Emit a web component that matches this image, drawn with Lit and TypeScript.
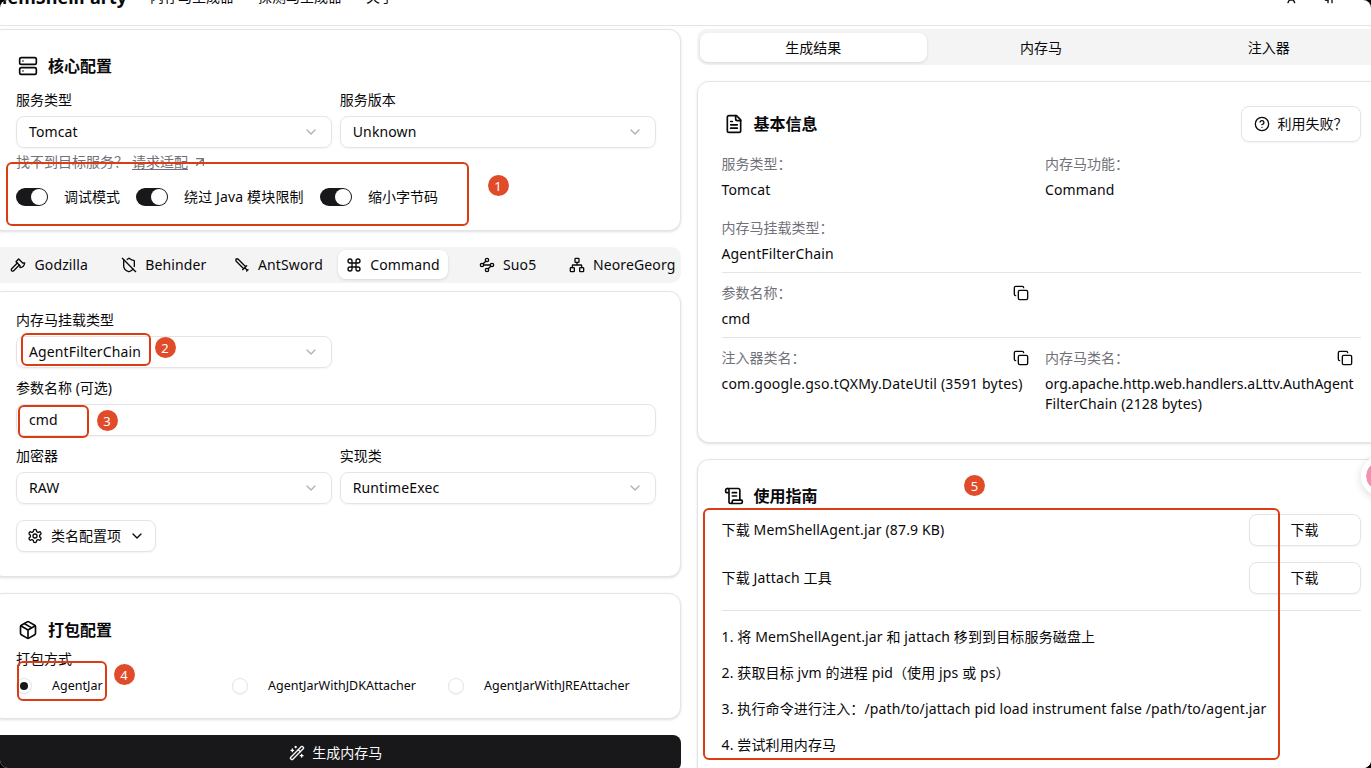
import { LitElement, html, css, svg } from "lit";
import { customElement, property } from "lit/decorators.js";

const icons: Record<string, unknown> = {
  server: svg`<rect x="2" y="2" width="20" height="8" rx="2"/><rect x="2" y="14" width="20" height="8" rx="2"/><path d="M6 6h.01M6 18h.01"/>`,
  chevron: svg`<path d="m6 9 6 6 6-6"/>`,
  arrow: svg`<path d="M7 7h10v10M7 17 17 7"/>`,
  axe: svg`<path d="m14 12-8.5 8.5a2.12 2.12 0 1 1-3-3L11 9"/><path d="M15 13 9 7l4-4 6 6h3a8 8 0 0 1-7 7z"/>`,
  shieldOff: svg`<path d="m2 2 20 20"/><path d="M5 5a1 1 0 0 0-1 1v7c0 5 3.5 7.5 7.67 8.94a1 1 0 0 0 .67.01c2.35-.82 4.48-1.97 5.9-3.71"/><path d="M9.309 3.652A12.252 12.252 0 0 0 11.24 2.28a1.17 1.17 0 0 1 1.52 0C14.51 3.81 17 5 19 5a1 1 0 0 1 1 1v7a9.784 9.784 0 0 1-.08 1.264"/>`,
  sword: svg`<path d="M14.5 17.5 3 6V3h3l11.5 11.5M13 19l6-6M16 16l4 4M19 21l2-2"/>`,
  command: svg`<path d="M15 6v12a3 3 0 1 0 3-3H6a3 3 0 1 0 3 3V6a3 3 0 1 0-3 3h12a3 3 0 1 0-3-3"/>`,
  waypoints: svg`<circle cx="12" cy="4.5" r="2.5"/><path d="m10.2 6.3-3.9 3.9"/><circle cx="4.5" cy="12" r="2.5"/><path d="M7 12h10"/><circle cx="19.5" cy="12" r="2.5"/><path d="m13.8 17.7 3.9-3.9"/><circle cx="12" cy="19.5" r="2.5"/>`,
  network: svg`<rect x="16" y="16" width="6" height="6" rx="1"/><rect x="2" y="16" width="6" height="6" rx="1"/><rect x="9" y="2" width="6" height="6" rx="1"/><path d="M5 16v-3a1 1 0 0 1 1-1h12a1 1 0 0 1 1 1v3M12 12V8"/>`,
  wand: svg`<path d="m21.64 3.64-1.28-1.28a1.21 1.21 0 0 0-1.72 0L2.36 18.64a1.21 1.21 0 0 0 0 1.72l1.28 1.28a1.2 1.2 0 0 0 1.72 0L21.64 5.36a1.2 1.2 0 0 0 0-1.72"/><path d="m14 7 3 3M5 6v4M19 14v4M10 2v2M7 8H3M21 16h-4M11 3H9"/>`,
  box: svg`<path d="M11 21.73a2 2 0 0 0 2 0l7-4A2 2 0 0 0 21 16V8a2 2 0 0 0-1-1.73l-7-4a2 2 0 0 0-2 0l-7 4A2 2 0 0 0 3 8v8a2 2 0 0 0 1 1.73z"/><path d="M12 22V12M3.29 7 12 12l8.71-5M7.5 4.27l9 5.15"/>`,
  settings: svg`<path d="M12.22 2h-.44a2 2 0 0 0-2 2v.18a2 2 0 0 1-1 1.73l-.43.25a2 2 0 0 1-2 0l-.15-.08a2 2 0 0 0-2.73.73l-.22.38a2 2 0 0 0 .73 2.73l.15.1a2 2 0 0 1 1 1.72v.51a2 2 0 0 1-1 1.74l-.15.09a2 2 0 0 0-.73 2.73l.22.38a2 2 0 0 0 2.73.73l.15-.08a2 2 0 0 1 2 0l.43.25a2 2 0 0 1 1 1.73V20a2 2 0 0 0 2 2h.44a2 2 0 0 0 2-2v-.18a2 2 0 0 1 1-1.73l.43-.25a2 2 0 0 1 2 0l.15.08a2 2 0 0 0 2.73-.73l.22-.39a2 2 0 0 0-.73-2.73l-.15-.08a2 2 0 0 1-1-1.74v-.5a2 2 0 0 1 1-1.74l.15-.09a2 2 0 0 0 .73-2.73l-.22-.38a2 2 0 0 0-2.73-.73l-.15.08a2 2 0 0 1-2 0l-.43-.25a2 2 0 0 1-1-1.73V4a2 2 0 0 0-2-2z"/><circle cx="12" cy="12" r="3"/>`,
  file: svg`<path d="M15 2H6a2 2 0 0 0-2 2v16a2 2 0 0 0 2 2h12a2 2 0 0 0 2-2V7Z"/><path d="M14 2v4a2 2 0 0 0 2 2h4M10 9H8M16 13H8M16 17H8"/>`,
  scroll: svg`<path d="M15 12h-5M15 8h-5M19 17V5a2 2 0 0 0-2-2H4"/><path d="M8 21h12a2 2 0 0 0 2-2v-1a1 1 0 0 0-1-1H11a1 1 0 0 0-1 1v1a2 2 0 1 1-4 0V5a2 2 0 1 0-4 0v2a1 1 0 0 0 1 1h3"/>`,
  copy: svg`<rect x="8" y="8" width="14" height="14" rx="2"/><path d="M4 16c-1.1 0-2-.9-2-2V4c0-1.1.9-2 2-2h10c1.1 0 2 .9 2 2"/>`,
  help: svg`<circle cx="12" cy="12" r="10"/><path d="M9.09 9a3 3 0 0 1 5.83 1c0 2-3 3-3 3M12 17h.01"/>`,
  languages: svg`<path d="m5 8 6 6M4 14l6-6 2-3M2 5h12M7 2h1M22 22l-5-10-5 10M14 18h6"/>`,
  github: svg`<path d="M15 22v-4a4.8 4.8 0 0 0-1-3.5c3 0 6-2 6-5.5.08-1.25-.27-2.48-1-3.5.28-1.15.28-2.35 0-3.5 0 0-1 0-3 1.5-2.64-.5-5.36-.5-8 0C6 2 5 2 5 2c-.3 1.15-.3 2.35 0 3.5A5.403 5.403 0 0 0 4 9c0 3.5 3 5.5 6 5.5-.39.49-.68 1.05-.85 1.65-.17.6-.22 1.23-.15 1.85v4"/><path d="M9 18c-4.51 2-5-2-7-2"/>`,
};

@customElement("ui-icon")
export class UiIcon extends LitElement {
  @property() name = "";
  static styles = css`
    :host { display: block; width: 16px; height: 16px; flex: none; }
    svg { display: block; width: 100%; height: 100%; overflow: visible; fill: none; stroke: currentColor; stroke-width: 2; stroke-linecap: round; stroke-linejoin: round; }
  `;
  render() {
    return html`<svg viewBox="0 0 24 24">${icons[this.name]}</svg>`;
  }
}

@customElement("ui-select")
export class UiSelect extends LitElement {
  @property() value = "";
  static styles = css`
    :host { display: flex; box-sizing: border-box; height: 32px; align-items: center; justify-content: space-between; padding: 0 12px; border: 1px solid #e4e4e7; border-radius: 8px; box-shadow: 0 1px 2px rgba(0, 0, 0, 0.05); line-height: 20px; letter-spacing: 0.12px; }
    ui-icon { color: #b0b0b4; }
  `;
  render() {
    return html`<span>${this.value}</span><ui-icon name="chevron"></ui-icon>`;
  }
}

@customElement("app-root")
export class AppRoot extends LitElement {
  static styles = css`
    * { box-sizing: border-box; }
    :host { display: block; position: relative; width: 1371px; height: 768px; overflow: hidden; background: #000; color: #09090b; font: 14px/20px "Noto Sans", "Noto Sans CJK SC", sans-serif; }
    .page { height: 768px; overflow: hidden; background: #fff; border-radius: 8px; display: flex; flex-direction: column; }
    header { height: 26px; flex: none; border-bottom: 1px solid #e4e4e7; display: flex; align-items: flex-start; justify-content: space-between; white-space: nowrap; }
    nav { display: flex; gap: 24px; margin: -13px 0 0 -8px; }
    .brand { font-size: 18px; font-weight: 700; width: 133px; padding-left: 0; display: flex; justify-content: flex-end; margin-right: 1px; transform: translateX(2px); }
    .tools { display: flex; gap: 26px; margin: -12px 33px 0 0; }
    main { display: grid; grid-template-columns: 689.5px 689px; column-gap: 16px; margin: 3px 0 0 -9px; align-items: start; }
    .card { border: 1px solid #e4e4e7; border-radius: 12px; box-shadow: 0 1px 3px rgba(0, 0, 0, 0.1), 0 1px 2px -1px rgba(0, 0, 0, 0.1); padding: 0 24px; background: #fff; overflow: hidden; }
    .title { display: flex; align-items: center; gap: 10px; padding-left: 2px; height: 24px; font-size: 16px; line-height: 24px; font-weight: 700; }
    .title ui-icon { width: 20px; height: 20px; }
    .two { display: grid; grid-template-columns: 1fr 1fr; column-gap: 8px; }
    .label { line-height: 20px; height: 26px; }
    .core { height: 202px; padding-top: 24px; }
    .core .two { margin-top: 12px; }
    .hint { display: flex; align-items: center; color: #71717a; height: 20px; margin-top: 4px; }
    .hint .q { width: 116px; white-space: nowrap; }
    .hint u { text-underline-offset: 2px; margin-right: 4px; }
    .switches { display: flex; align-items: center; gap: 16px; height: 20px; margin-top: 15px; white-space: nowrap; }
    .switch { width: 32px; height: 18px; border-radius: 9px; background: #18181b; padding: 1px; display: flex; justify-content: flex-end; }
    .switch::after { content: ""; width: 16px; height: 16px; border-radius: 50%; background: #fff; }
    .w120 { width: 120px; letter-spacing: 0.15px; }
    .tabs { display: grid; height: 36px; border-radius: 10px; background: #f4f4f5; padding: 3px; }
    .tab { display: flex; align-items: center; justify-content: center; gap: 8px; height: 29px; border-radius: 8px; white-space: nowrap; }
    .tab.on { background: #fff; box-shadow: 0 1px 3px rgba(0, 0, 0, 0.12); }
    .kinds { grid-template-columns: repeat(6, 1fr); gap: 4px; margin: 16px 0 8px; letter-spacing: 0.14px; }
    .results { grid-template-columns: repeat(3, 1fr); padding-top: 4px; }
    .shell { height: 286px; padding-top: 18px; }
    .half { width: 316px; }
    .gap { margin-top: 10px; }
    .input { height: 32px; border: 1px solid #e4e4e7; border-radius: 8px; box-shadow: 0 1px 2px rgba(0, 0, 0, 0.05); padding: 5px 12px; letter-spacing: 0.12px; }
    .btn { display: flex; align-items: center; justify-content: center; gap: 8px; border: 1px solid #e4e4e7; border-radius: 8px; background: #fff; box-shadow: 0 1px 2px rgba(0, 0, 0, 0.05); height: 32px; white-space: nowrap; }
    .classes { width: 140px; margin-top: 16px; }
    .pack { height: 126px; margin-top: 16px; padding-top: 24px; }
    .pack .label { margin-top: 7px; height: 20px; }
    .radios { display: grid; grid-template-columns: repeat(3, 216px); margin-top: 7px; font-size: 12.5px; }
    .radio { display: flex; align-items: center; gap: 20px; height: 20px; }
    .dot { width: 16px; height: 16px; border: 1px solid #e4e4e7; border-radius: 50%; box-shadow: 0 1px 2px rgba(0, 0, 0, 0.05); display: grid; place-items: center; flex: none; }
    .dot.on::after { content: ""; width: 8px; height: 8px; border-radius: 50%; background: #18181b; }
    .go { display: flex; align-items: center; justify-content: center; gap: 7px; height: 36px; margin-top: 16px; border-radius: 8px; background: #18181b; color: #fafafa; }
    .info { height: 362px; margin-top: 16px; padding-top: 24px; }
    .bar { display: flex; align-items: center; justify-content: space-between; height: 36px; }
    .help { width: 120px; height: 36px; }
    .facts { display: grid; grid-template-columns: 1fr 1fr; column-gap: 8px; letter-spacing: 0.14px; }
    .facts.base { padding: 2px 0 0; }
    .fact { height: 64px; padding-top: 10px; }
    .fact .k { display: flex; justify-content: space-between; align-items: center; height: 20px; color: #71717a; margin-bottom: 6px; padding-right: 8px; letter-spacing: 0; }
    .fact .k ui-icon { color: #09090b; }
    .wide { letter-spacing: 0.21px; }
    .tight { letter-spacing: 0.02px; }
    .line { border-top: 1px solid #e4e4e7; }
    .guide { height: 340px; margin-top: 16px; padding-top: 24px; }
    .dl { display: flex; justify-content: space-between; align-items: center; height: 32px; margin-bottom: 16px; letter-spacing: 0.16px; }
    .dl.first { margin-top: 6px; }
    .dl .btn { width: 112px; letter-spacing: 0; }
    .steps { margin-top: 16px; display: grid; row-gap: 16px; white-space: nowrap; letter-spacing: 0.13px; }
    .mark { position: absolute; border: 2px solid #dc3c14; border-radius: 6px; }
    .m1 { left: 6px; top: 162px; width: 463px; height: 64px; }
    .m2 { left: 21px; top: 333px; width: 130px; height: 33px; }
    .m3 { left: 18px; top: 405px; width: 71px; height: 33px; }
    .m4 { left: 17px; top: 661px; width: 90px; height: 40px; }
    .m5 { left: 703px; top: 508px; width: 577px; height: 252px; }
    .num { position: absolute; width: 21px; height: 21px; border-radius: 50%; background: #e04c2a; color: #fff; text-align: center; line-height: 22px; font-size: 13px; }
    .n1 { left: 487.5px; top: 174.5px; }
    .n2 { left: 154.5px; top: 336.5px; }
    .n3 { left: 96.5px; top: 410px; }
    .n4 { left: 113.5px; top: 663.5px; }
    .n5 { left: 964px; top: 475px; }
    .bubble { position: absolute; left: 1361px; top: 456px; width: 40px; height: 40px; border: 5px solid #fff; border-radius: 50%; background: #f490b0; background-clip: padding-box; box-shadow: 0 2px 8px rgba(0, 0, 0, 0.15); }
    .bubble::before { content: ""; position: absolute; inset: -5px; border: 5.5px solid #fff; border-radius: 50%; }
  `;

  private kinds = [
    ["axe", "Godzilla"], ["shieldOff", "Behinder"], ["sword", "AntSword"],
    ["command", "Command"], ["waypoints", "Suo5"], ["network", "NeoreGeorg"],
  ];

  private fact(k: string, v: unknown, copy = false) {
    return html`<div class="fact"><div class="k"><span>${k}</span>${copy ? html`<ui-icon name="copy"></ui-icon>` : ""}</div><div>${v}</div></div>`;
  }

  render() {
    return html`
      <div class="page">
        <header>
          <nav><span class="brand">MemShellParty</span><span>内存马生成器</span><span>探测马生成器</span><span>关于</span></nav>
          <div class="tools"><ui-icon name="languages"></ui-icon><ui-icon name="github"></ui-icon></div>
        </header>
        <main>
          <section>
            <div class="card core">
              <div class="title"><ui-icon name="server"></ui-icon>核心配置</div>
              <div class="two">
                <div><div class="label">服务类型</div><ui-select value="Tomcat"></ui-select></div>
                <div><div class="label">服务版本</div><ui-select value="Unknown"></ui-select></div>
              </div>
              <div class="hint"><span class="q">找不到目标服务？</span><u>请求适配</u><ui-icon name="arrow"></ui-icon></div>
              <div class="switches">
                <i class="switch"></i><span>调试模式</span>
                <i class="switch"></i><span class="w120">绕过 Java 模块限制</span>
                <i class="switch"></i><span>缩小字节码</span>
              </div>
            </div>
            <div class="tabs kinds">
              ${this.kinds.map(([i, t]) => html`<div class="tab ${t === "Command" ? "on" : ""}"><ui-icon name=${i}></ui-icon><span>${t}</span></div>`)}
            </div>
            <div class="card shell">
              <div class="label">内存马挂载类型</div>
              <ui-select class="half" value="AgentFilterChain"></ui-select>
              <div class="label gap">参数名称 (可选)</div>
              <div class="input">cmd</div>
              <div class="two gap">
                <div><div class="label">加密器</div><ui-select value="RAW"></ui-select></div>
                <div><div class="label">实现类</div><ui-select value="RuntimeExec"></ui-select></div>
              </div>
              <div class="btn classes"><ui-icon name="settings"></ui-icon>类名配置项<ui-icon name="chevron"></ui-icon></div>
            </div>
            <div class="card pack">
              <div class="title"><ui-icon name="box"></ui-icon>打包配置</div>
              <div class="label">打包方式</div>
              <div class="radios">
                <div class="radio"><i class="dot on"></i>AgentJar</div>
                <div class="radio"><i class="dot"></i>AgentJarWithJDKAttacher</div>
                <div class="radio"><i class="dot"></i>AgentJarWithJREAttacher</div>
              </div>
            </div>
            <div class="go"><ui-icon name="wand"></ui-icon>生成内存马</div>
          </section>
          <section>
            <div class="tabs results">
              <div class="tab on">生成结果</div><div class="tab">内存马</div><div class="tab">注入器</div>
            </div>
            <div class="card info">
              <div class="bar">
                <div class="title"><ui-icon name="file"></ui-icon>基本信息</div>
                <div class="btn help"><ui-icon name="help"></ui-icon>利用失败？</div>
              </div>
              <div class="facts base">
                ${this.fact("服务类型：", "Tomcat")}${this.fact("内存马功能：", "Command")}
                ${this.fact("内存马挂载类型：", "AgentFilterChain")}
              </div>
              <div class="facts line">${this.fact("参数名称：", "cmd", true)}</div>
              <div class="facts line">
                ${this.fact("注入器类名：", html`<div class="wide">com.google.gso.tQXMy.DateUtil (3591 bytes)</div>`, true)}
                ${this.fact("内存马类名：", html`<div class="tight">org.apache.http.web.handlers.aLttv.AuthAgent</div><div>FilterChain (2128 bytes)</div>`, true)}
              </div>
            </div>
            <div class="card guide">
              <div class="title"><ui-icon name="scroll"></ui-icon>使用指南</div>
              <div class="dl first"><span>下载 MemShellAgent.jar (87.9 KB)</span><div class="btn">下载</div></div>
              <div class="dl"><span>下载 Jattach 工具</span><div class="btn">下载</div></div>
              <div class="line"></div>
              <div class="steps">
                <div>1. 将 MemShellAgent.jar 和 jattach 移到到目标服务磁盘上</div>
                <div>2. 获取目标 jvm 的进程 pid（使用 jps 或 ps）</div>
                <div>3. 执行命令进行注入：/path/to/jattach pid load instrument false /path/to/agent.jar</div>
                <div>4. 尝试利用内存马</div>
              </div>
            </div>
          </section>
        </main>
      </div>
      <div class="bubble"></div>
      ${[1, 2, 3, 4, 5].map((n) => html`<div class="mark m${n}"></div><div class="num n${n}">${n}</div>`)}
    `;
  }
}
